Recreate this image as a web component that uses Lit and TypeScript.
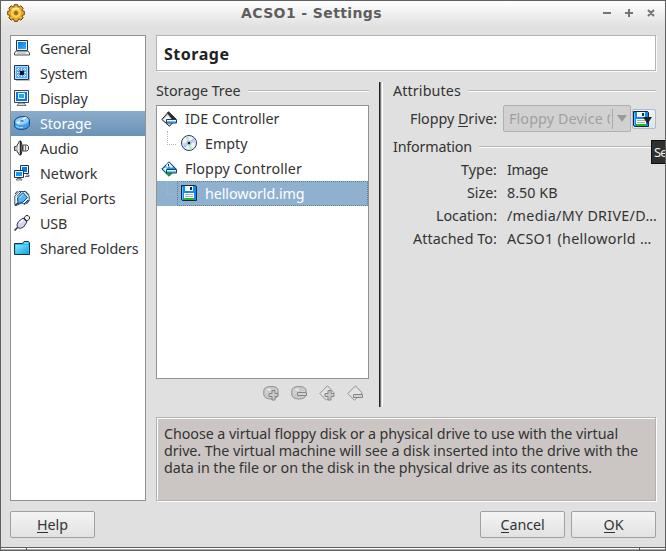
import { LitElement, html, css, svg } from 'lit';
import { customElement, property } from 'lit/decorators.js';

/* Single-line label whose tracking is adjusted so that it fills a given advance width. */
@customElement('fit-label')
class FitLabel extends LitElement {
  @property() text = '';
  @property({ type: Number }) w = 0;
  @property({ type: Number }) key = -1;
  static styles = css`
    :host { display: inline-block; white-space: pre; justify-self: start; flex: none; }
    .key { display: inline-block; position: relative; }
    .key::after { content: ''; position: absolute; left: 0; right: 0; bottom: 1px; height: 1px; background: currentColor; }
  `;
  updated() {
    this.style.letterSpacing = '0px';
    this.style.width = 'max-content';
    const natural = this.getBoundingClientRect().width;
    this.style.letterSpacing = (this.w - natural) / this.text.length + 'px';
    this.style.width = this.w + 'px';
  }
  render() {
    const { text: t, key: k } = this;
    return k < 0 ? html`${t}` : html`${t.slice(0, k)}<span class="key">${t[k]}</span>${t.slice(k + 1)}`;
  }
}

const fit = (text: string, w: number, key = -1) =>
  html`<fit-label .text=${text} .w=${w} .key=${key}></fit-label>`;

const shapes: Record<string, unknown> = {
  general: svg`
    <path d="M2.500 .5h11v10h-11z" fill="#e9f3fb" stroke="#17365e"/>
    <path d="M4 2h8v7H4z" fill="url(#blue)"/>
    <path d="M2 11h12l1.500 2v2H.5v-2z" fill="#f2f2f2" stroke="#4b4f55"/><path d="M3 13h9" stroke="#aaa"/>`,
  system: svg`
    <path d="M15.500 2v13.500H2" stroke="#bbb" fill="none"/>
    <path d="M.5 .5h14v14H.5z" fill="#b8dcff" stroke="#17365e"/><path d="M2 2h11v11H2z" fill="#5aaef5"/>
    <path d="M3 4.500h9M3 7.500h9M3 10.500h9" stroke="#fff" stroke-dasharray="1 1"/><path d="M4.500 3v9M7.500 3v9M10.500 3v9" stroke="#e9f6ff" stroke-dasharray="1 1"/>
    <path d="M6 6h4v4H6z" fill="#071220"/><path d="M5 5h5v5H5z" fill="none" stroke="#164a86" stroke-width=".5"/>`,
  display: svg`
    <path d="M.5 .5h14v12H.5z" fill="#f1f7fb" stroke="#3b4552"/>
    <path d="M2 2h11v9H2z" fill="#087add"/><path d="M4.500 3.500h6v5h-6z" fill="#27a5f6" stroke="#fff"/>
    <path d="M5 13h5l2 2.500H3z" fill="#ddd" stroke="#555" stroke-width=".8"/>`,
  storage: svg`
    <path d="M.5 7C.5 4 4 1.500 8.500 1.500S15.500 3.500 15.500 5.500v4c0 3-4 5-8 5s-7-1.500-7-4z" fill="#3f9bea" stroke="#1c456f"/>
    <ellipse cx="8" cy="6" rx="6.700" ry="3.900" fill="#8dcdfb" transform="rotate(-8 8 6)"/>
    <path d="M8 6L2 7l2 2zM8 5.500l5-3-3-.5z" fill="#eefaff"/>
    <ellipse cx="8" cy="6" rx="2.500" ry="1.300" fill="#3576b4" stroke="#e3f5ff" stroke-width=".7"/>
    <path d="M2 11q3 2.500 7 1.500" stroke="#a5dcff" fill="none"/>`,
  audio: svg`
    <path d="M.5 6.500h2L5.500 1h1.500v14H5.500l-3-4.500h-2z" fill="#c2c2c2" stroke="#444"/>
    <path d="M6.500 1q4 7 0 14z" fill="#777" stroke="#222"/><path d="M9 5h4l1.500 1.500v3L13 11H9z" fill="#e5e5e5" stroke="#444"/>
    <path d="M11.500 5v6" stroke="#777"/><path d="M4.500 4v8" stroke="#eee"/>`,
  network: svg`
    <path d="M6.500 .5h8v8h-8z" fill="#e3f3ff" stroke="#17365e"/><path d="M8 2h5v5H8z" fill="#087ce0"/>
    <path d="M12 10h3v1.500h-4" fill="none" stroke="#667"/>
    <path d="M.5 5.500h9v7h-9z" fill="#e9f6ff" stroke="#17365e"/><path d="M2 7h6v4H2z" fill="#1698f3"/>
    <path d="M3 13.500h4l1 1.500H2z" fill="#ddd" stroke="#555" stroke-width=".8"/>`,
  serial: svg`
    <path d="M.8 6L5 1.500h6L15.200 6v4L11 14.500 8 13l-6 2.500L.8 14z" fill="#eef8ff" stroke="#36506e"/>
    <path d="M1 4l2.500-3M3 6.500L7 2M11 .8l4 4M12.500 14l3-3.500M10 14l4-4" stroke="#17365e"/>
    <path d="M3.500 8L9 2.500l4.500 5L9 12l-5 1.500z" fill="#4fb7f3" stroke="#124f88"/>
    <path d="M4 13L.8 15.500" stroke="#234" stroke-width="1.500"/><path d="M5.500 8L9 4.500" stroke="#c6f2ff"/>`,
  usb: svg`
    <path d="M10 3l2-2.500h2L15.500 2v2L13 6z" fill="#eee" stroke="#333"/>
    <path d="M9 3l4 4-3.500 5q-3 2.500-6 .5-1.500-3 1-6z" fill="#d3d3f4" stroke="#33384d"/>
    <path d="M3.500 12.500L.5 15.500" stroke="#333" stroke-width="1.500"/><path d="M5.500 8l3.500-3" stroke="#fff" stroke-width="1.500"/>`,
  folder: svg`
    <path d="M.5 14.500v-11h8l1.500-2h4.500l1 1v12z" fill="#2dbce8" stroke="#14344f"/>
    <path d="M1.500 5H14v9H1.500z" fill="url(#cyan)"/><path d="M10 3h4" stroke="#a8f0ff"/>`,
  ide: svg`
    <path d="M.8 8.500L7.500 .8 15 8l-6.500 7.200z" fill="#d9d9d9" stroke="#222"/><path d="M6 2l1.500-1.200L15 8l-1 1-3-.5z" fill="#2d2d2d"/>
    <path d="M2.500 9l4-4.500 3.500 4L8 13z" fill="#f6f6f6"/><path d="M2 8l5-5" stroke="#aaa"/>
    <path d="M5.500 8.500h10v3.500h-10z" fill="#66c4ff" stroke="#123d6c"/><path d="M6 9.500h9" stroke="#f4fcff"/>`,
  floppyCtl: svg`
    <path d="M.8 8L8 .8 15.200 8 8 15.200z" fill="#2499df" stroke="#173153"/>
    <path d="M5 4l3-2.500L12 6l-2 1-2-2-2 2z" fill="#eefaff"/><path d="M2 8l3-2 2 4-2 1z" fill="#e7fbff"/><path d="M4 12l3-2 4 2-3 3z" fill="#22b321"/><path d="M7 3h1v2H7z" fill="#124"/>
    <path d="M5.500 8.500h10v3.500h-10z" fill="#66c4ff" stroke="#123d6c"/><path d="M6 9.500h9" stroke="#f4fcff"/>`,
  cd: svg`
    <circle cx="8" cy="8" r="7.500" fill="#f0f5fa" stroke="#26365b"/>
    <path d="M8 8L4.500 2l3-1zM8 8l3.500 6-3 1z" fill="#b7ebb7"/><path d="M8 8l6.500-3v3zM8 8l-6.500 3V8z" fill="#e4c2f4"/><path d="M8 8l4-5 2 2zM8 8l-4 5-2-2z" fill="#8ed3fb"/>
    <circle cx="8" cy="8" r="2.800" fill="#b7cce4"/><circle cx="8" cy="8" r="1.300" fill="#101b35"/>`,
  floppy: svg`
    <path d="M.5 .5h14l1 1v14h-14l-1-1z" fill="#1489e8" stroke="#10254a"/>
    <path d="M4 1h8v5H4z" fill="#f4fbff"/><path d="M9 2h2v3H9z" fill="#122c50"/>
    <path d="M3 8h10v7H3z" fill="#fff"/><path d="M4 9.500h8M4 11.500h8" stroke="#9cb2c3"/>
    <path d="M3 13h10v2H3z" fill="#23b817"/><path d="M1.500 2v12" stroke="#59c1ff"/>`,
  gear: svg`
    <path d="M7.300 .7h3.400l.5 2 .9.3 1.700-1.200 2.400 2.400L15 5.900l.3.9 2 .5v3.400l-2 .5-.3.9 1.200 1.700-2.400 2.400-1.700-1.200-.9.3-.5 2H7.300l-.5-2-.9-.3-1.700 1.200-2.400-2.400L3 12.100l-.3-.9-2-.5V7.300l2-.5.3-.9-1.200-1.700 2.400-2.400L5.900 3l.9-.3z" fill="#f0aa25" stroke="#65410e"/>
    <circle cx="9" cy="9" r="5" fill="#ffd050"/><path d="M5 6q3-3 7-1" stroke="#fff1aa" fill="none" stroke-width="1.500"/>
    <circle cx="9" cy="9" r="2" fill="#d89a28" stroke="#9a6a15"/><circle cx="9" cy="9" r=".8" fill="#422b10"/>`,
};

const disc = svg`<path d="M.8 6q0-4.500 7-4.500T15 5v5q-1 4-7 4T.8 10z" fill="#c9c9c9" stroke="#919191"/><path d="M2 7q4 3 12-1" fill="none" stroke="#ddd"/><path d="M3 5l4-2 1 3z" fill="#ececec"/>`;
const diamond = svg`<path d="M.8 8.500L8.500 .8l6.500 7-7.500 7.500z" fill="#e3e3e3" stroke="#929292"/>`;
const plus = svg`<path d="M9 5.500h3v3h3v3h-3v3.500H9v-3.500H6v-3h3z" fill="#c9c9c9" stroke="#858585"/>`;
shapes.addDisk = svg`${disc}${plus}`;
shapes.removeDisk = svg`${disc}<path d="M6.500 7.500h9v3h-9z" fill="#d2d2d2" stroke="#858585"/>`;
shapes.addCtl = svg`${diamond}${plus}`;
shapes.removeCtl = svg`${diamond}<path d="M6.500 9.500h9v3h-9z" fill="#d2d2d2" stroke="#858585"/>`;

const icon = (name: string, box = 16) => html`
  <svg class="icon" width=${box} height=${box} viewBox="0 0 ${box} ${box}">
    <defs>
      <linearGradient id="blue" x2="1" y2="1"><stop stop-color="#0875db"/><stop offset="1" stop-color="#33b4ff"/></linearGradient>
      <linearGradient id="cyan" x2="1" y2="1"><stop stop-color="#83eaff"/><stop offset="1" stop-color="#12a6e0"/></linearGradient>
    </defs>${shapes[name]}</svg>`;

const pages: [string, string, number][] = [
  ['general', 'General', 51], ['system', 'System', 47.5], ['display', 'Display', 47.5], ['storage', 'Storage', 51.5],
  ['audio', 'Audio', 38.5], ['network', 'Network', 57.5], ['serial', 'Serial Ports', 75.5], ['usb', 'USB', 27], ['folder', 'Shared Folders', 98.5],
];
const tree: [string, string, number, boolean][] = [
  ['ide', 'IDE Controller', 94.5, false], ['cd', 'Empty', 42.5, true],
  ['floppyCtl', 'Floppy Controller', 117, false], ['floppy', 'helloworld.img', 99.5, true],
];
const info: [string, number, string, number][] = [
  ['Type:', 36, 'Image', 41], ['Size:', 30, '8.50 KB', 50.5],
  ['Location:', 61, '/media/MY DRIVE/D…', 150], ['Attached To:', 84, 'ACSO1 (helloworld …', 144.5],
];
const help: [string, number][] = [
  ['Choose a virtual floppy disk or a physical drive to use with the virtual', 454],
  ['drive. The virtual machine will see a disk inserted into the drive with the', 474],
  ['data in the file or on the disk in the physical drive as its contents.', 428],
];

@customElement('app-root')
class AppRoot extends LitElement {
  static styles = css`
    :host { display: block; height: 551px; }
    * { box-sizing: border-box; }
    .window { position: relative; height: 551px; overflow: hidden; display: flex; flex-direction: column; background: #e0e0e0; border: 1px solid #606060; border-bottom: 0;
      color: #333; font: 14.3px/18px 'Noto Sans', sans-serif; }
    .icon { display: block; flex: none; }
    .titlebar { height: 26px; flex: none; display: flex; align-items: center; padding: 0 8px 2px 6px;
      background: linear-gradient(#fff, #e0e0e0); color: #5e5e5e; font: bold 14px/18px 'DejaVu Sans', sans-serif; }
    .title { margin: 0 auto 0 216px; }
    .body { flex: none; height: 466px; margin: 8px 9px 0; display: flex; gap: 10px; }
    .sidebar { width: 136px; border: 1px solid #929292; background: #fff; }
    .page { height: 25px; display: flex; align-items: center; gap: 10px; padding-left: 3px; }
    .page.on { background: linear-gradient(#8aacca, #6b93b6); color: #fff; }
    .page .icon { margin-top: -1px; }
    .main { width: 500px; display: flex; flex-direction: column; }
    .heading { height: 36px; flex: none; border: 1px solid #b4b4b4; background: #fff; box-shadow: 1px 1px #f8f8f8; padding: 9px 7px; font-size: 16px; font-weight: bold; color: #222; }
    .split { height: 325px; flex: none; margin-top: 11px; display: flex; }
    .left { width: 213px; }
    .rule { width: 4px; margin: 0 10px; background: linear-gradient(90deg, #222 1px, #777 1px 2px, #d5d5d5 2px 3px, #fff 3px); }
    .right { width: 263px; }
    .group { height: 18px; display: flex; align-items: center; gap: 7px; }
    .group::after { content: ''; flex: 1; height: 1px; background: #b5b5b5; border-bottom: 1px solid #fff; }
    .tree { height: 274px; margin-top: 5px; border: 1px solid #929292; background: #fff; }
    .node { height: 25px; display: flex; align-items: center; padding-left: 4px; gap: 8px; }
    .node.child { gap: 4px; padding-left: 10px; }
    .elbow { width: 9px; height: 14px; align-self: flex-start; border: 1px dotted #b5b5b5; border-width: 0 0 1px 1px; margin-right: 1px; }
    .item { flex: 1; height: 25px; display: flex; align-items: center; gap: 8px; padding-left: 3px; border: 1px dotted transparent; margin-left: -4px; }
    .item .icon { margin-top: -1px; }
    .node.on { background: #8fb1d0; color: #fff; }
    .node.on .item { border-color: #697e90; }
    .tools { display: flex; justify-content: flex-end; gap: 12px; padding: 6px 6px 0; }
    .drive { height: 27px; margin-top: 5px; display: flex; align-items: center; justify-content: flex-end; }
    .combo { width: 128px; height: 27px; margin: 0 1px 0 6px; border: 1px solid #b0b0b0; border-radius: 2px; background: #d1d1d1; color: #a0a0a0; display: flex; align-items: center; padding-left: 5px; }
    .clip { width: 101px; margin-right: 2px; overflow: hidden; height: 18px; flex: none; }
    .arrow { width: 18px; height: 20px; border-left: 1px solid #aaa; display: grid; place-items: center; }
    .pick { width: 24px; height: 20px; border: 1px solid #b0bbc6; border-radius: 2px; background: linear-gradient(#f0f3f7, #dce5ee); position: relative; display: flex; align-items: center; }
    .down { position: absolute; left: 10px; top: 7px; }
    .info { margin-top: 6px; }
    .facts { padding-top: 2px; }
    .fact { height: 23px; display: grid; grid-template-columns: 104px auto; column-gap: 10px; align-items: center; }
    .name { display: flex; justify-content: flex-end; }
    .hint { margin-top: 10px; height: 84px; background: #cbc6c3; border: 1px solid #b1b1b1; box-shadow: inset 1px 1px #fff, 1px 1px #fff; padding: 7px 7px; }
    .line { height: 17px; line-height: 17px; }
    .buttons { height: 27px; flex: none; margin: 10px 9px 0; display: flex; gap: 6px; }
    .button { width: 85px; border: 1px solid #a0a0a0; border-radius: 2px; background: linear-gradient(#f4f4f4, #e2e2e2); display: flex; align-items: center; justify-content: center; }
    .spacer { flex: 1; }
    .grip { margin-top: auto; height: 4px; flex: none; border-top: 1px solid #606060; border-bottom: 1px solid #606060; background: linear-gradient(#fff 1px, #aaa 1px);
      display: flex; justify-content: space-between; padding: 0 25px; }
    .tick { width: 1px; background: #555; }
    .tip { position: absolute; left: 650px; top: 139px; width: 16px; height: 24px; overflow: hidden; background: #30302e; border: 1px solid #111; border-right: 0; color: #eee; font-size: 13px; line-height: 18px; padding: 2px 0 2px 2px; }
  `;
  button = (label: string, w: number) => html`<div class="button">${fit(label, w, 0)}</div>`;
  render() {
    return html`<div class="window">
      <div class="titlebar">${icon('gear', 18)}<div class="title">${fit('ACSO1 - Settings', 141)}</div>
        <svg class="icon" width="56" height="12" viewBox="0 0 56 12"><path d="M2 6h8M24 6h8M28 2v8M47 3l6 6M53 3l-6 6" stroke="#757575" stroke-width="2"/></svg>
      </div>
      <div class="body">
        <div class="sidebar">${pages.map(([i, t, w]) => html`<div class="page ${i === 'storage' ? 'on' : ''}">${icon(i)}${fit(t, w)}</div>`)}</div>
        <div class="main">
          <div class="heading">${fit('Storage', 65.5)}</div>
          <div class="split">
            <div class="left">
              <div class="group">${fit('Storage Tree', 84.5)}</div>
              <div class="tree">${tree.map(([i, t, w, child]) => child
                ? html`<div class="node child ${i === 'floppy' ? 'on' : ''}"><div class="elbow"></div><div class="item">${icon(i)}${fit(t, w)}</div></div>`
                : html`<div class="node">${icon(i)}${fit(t, w)}</div>`)}</div>
              <div class="tools">${['addDisk', 'removeDisk', 'addCtl', 'removeCtl'].map((i) => icon(i))}</div>
            </div>
            <div class="rule"></div>
            <div class="right">
              <div class="group">${fit('Attributes', 68)}</div>
              <div class="drive">${fit('Floppy Drive:', 87, 7)}
                <div class="combo"><div class="clip">${fit('Floppy Device 0', 106)}</div>
                  <div class="arrow"><svg class="icon" width="10" height="7"><path d="M0 0h10L5 7z" fill="#9a9a9a"/></svg></div></div>
                <div class="pick">${icon('floppy')}<svg class="icon down" width="9" height="7"><path d="M0 0h9L4.500 7z" fill="#222"/></svg></div>
              </div>
              <div class="group info">${fit('Information', 79)}</div>
              <div class="facts">${info.map(([a, aw, b, bw]) => html`<div class="fact"><div class="name">${fit(a, aw)}</div>${fit(b, bw)}</div>`)}</div>
            </div>
          </div>
          <div class="hint">${help.map(([t, w]) => html`<div class="line">${fit(t, w)}</div>`)}</div>
        </div>
      </div>
      <div class="buttons">${this.button('Help', 31)}<div class="spacer"></div>${this.button('Cancel', 44)}${this.button('OK', 20)}</div>
      <div class="grip"><div class="tick"></div><div class="tick"></div></div>
      <div class="tip">${fit('Se', 12.5)}</div>
    </div>`;
  }
}
